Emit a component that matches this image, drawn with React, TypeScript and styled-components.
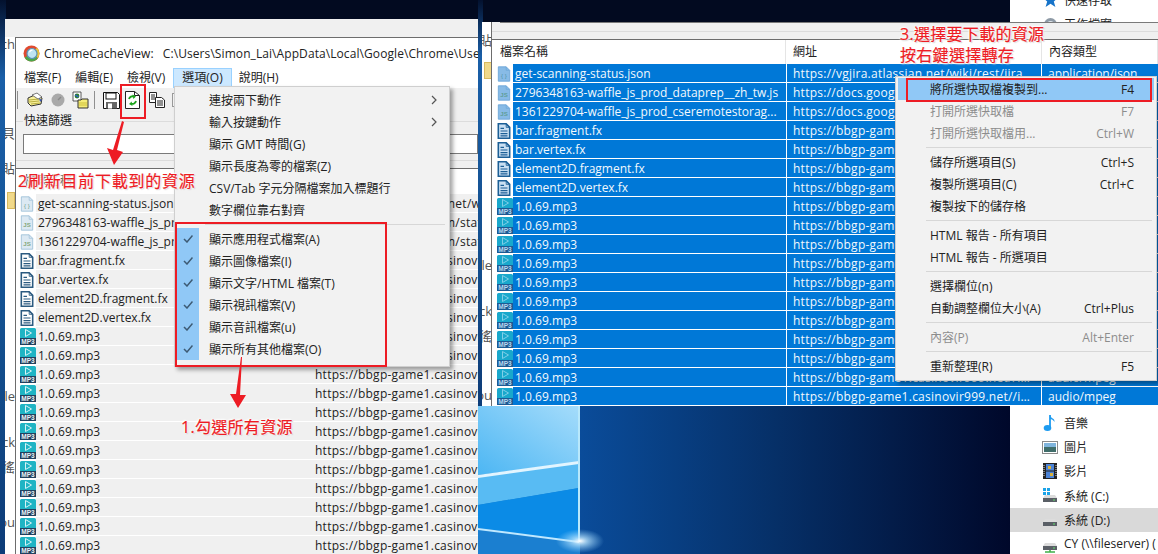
import React from "react";
import styled, { createGlobalStyle } from "styled-components";

const FONT = `"Open Sans", "Noto Sans CJK TC", sans-serif`;

const Global = createGlobalStyle`
  html, body { margin: 0; padding: 0; background: #020a20; }
  body { font-family: ${FONT}; font-size: 12px; color: #1a1a1a; }
`;

const Desktop = styled.div`
  position: relative;
  width: 1158px;
  height: 554px;
  overflow: hidden;
  background: #020a20;
`;
const WallpaperSvg = styled.svg`
  position: absolute;
  left: 0;
  top: 0;
`;

/* ---------- windows on the desktop ---------- */
const BackWindow = styled.div`
  position: absolute;
  left: 5px;
  top: 19px;
  width: 473px;
  height: 535px;
  background: #fff;
  display: flex;
  flex-direction: column;
  overflow: hidden;
`;
const BackTop = styled.div`
  height: 18px;
  background: #f0f0f0;
  flex: none;
`;
const BackFragment = styled.div<{ $gap: number }>`
  margin-top: ${(p) => p.$gap}px;
  height: 16px;
  line-height: 16px;
  width: 10px;
  flex: none;
  overflow: hidden;
  white-space: nowrap;
  color: #555;
  font-size: 13px;
  direction: rtl;
`;
const BackFolder = styled.div<{ $gap: number; $w: number }>`
  margin-top: ${(p) => p.$gap}px;
  margin-left: 2px;
  width: ${(p) => p.$w}px;
  height: 17px;
  flex: none;
  background: #f1d98a;
  border: 1px solid #d8b95e;
  box-sizing: border-box;
`;

const LeftWindow = styled.div`
  position: absolute;
  left: 15px;
  top: 37px;
  width: 463px;
  height: 517px;
  box-sizing: border-box;
  border-left: 1px solid #6d6d6d;
  border-top: 1px solid #6d6d6d;
  background: #f0f0f0;
  display: flex;
  flex-direction: column;
  overflow: hidden;
`;
const TitleBar = styled.div`
  height: 30px;
  flex: none;
  background: #fff;
  display: flex;
  align-items: center;
  padding-left: 7px;
  gap: 4px;
  white-space: nowrap;
  color: #222;
`;
const TitleText = styled.span`
  word-spacing: 6px;
  letter-spacing: 0.08px;
`;
const MenuBar = styled.div`
  height: 20px;
  flex: none;
  background: #fff;
  display: flex;
  align-items: center;
  padding-left: 7px;
  gap: 12px;
  color: #222;
`;
const MenuItem = styled.div<{ $active?: boolean }>`
  height: 20px;
  line-height: 18px;
  box-sizing: border-box;
  padding: 0 ${(p) => (p.$active ? 8 : 0)}px;
  margin: ${(p) => (p.$active ? "0 -6px 0 -5px" : "0")};
  border: 1px solid ${(p) => (p.$active ? "#99d1ff" : "transparent")};
  background: ${(p) => (p.$active ? "#cce8ff" : "transparent")};
`;
const Toolbar = styled.div`
  height: 30px;
  flex: none;
  display: flex;
  align-items: center;
  padding: 0 0 6px 0;
  box-sizing: border-box;
  gap: 5px;
`;
const ToolSep = styled.div<{ $left: number }>`
  width: 1px;
  height: 18px;
  background: #8f8f8f;
  margin: 0 3px 0 ${(p) => p.$left}px;
`;
const FilterGroup = styled.div`
  position: relative;
  height: 40px;
  margin-top: 3px;
  margin-bottom: 7px;
  flex: none;
  padding: 12px 0 0 7px;
  box-sizing: border-box;
  border-top: 1px solid #dcdcdc;
  border-bottom: 1px solid #dcdcdc;
`;
const FilterLegend = styled.div`
  position: absolute;
  left: 7px;
  top: -9px;
  padding: 0 2px 0 1px;
  line-height: 16px;
  background: #f0f0f0;
`;
const FilterInput = styled.div`
  height: 20px;
  background: #fff;
  border: 1px solid #7a7a7a;
  box-sizing: border-box;
`;
const ListTopLine = styled.div`
  height: 1px;
  flex: none;
  background: #6d6d6d;
`;
const LeftHeader = styled.div`
  height: 25px;
  flex: none;
  background: #fff;
  padding-left: 8px;
  line-height: 23px;
  color: #222;
`;
const RowList = styled.div`
  display: flex;
  flex-direction: column;
`;
const LeftRow = styled.div`
  height: 19px;
  flex: none;
  display: grid;
  grid-template-columns: 20px 278px 1fr;
  background: #fff;
`;
const LeftCell = styled.div<{ $url?: boolean }>`
  background: #f0f0f0;
  border-bottom: 1px solid #fff;
  line-height: 20px;
  padding-left: ${(p) => (p.$url ? 1 : 2)}px;
  letter-spacing: ${(p) => (p.$url ? 0.25 : 0)}px;
  white-space: nowrap;
  overflow: hidden;
  color: #222;
`;
const IconCell = styled.div`
  display: flex;
  align-items: center;
  justify-content: flex-end;
  height: 19px;
`;

const RightWindow = styled.div`
  position: absolute;
  left: 478px;
  top: 22px;
  width: 680px;
  height: 384px;
  display: grid;
  grid-template-columns: 4px 9px 1px 1fr;
  overflow: hidden;
`;
const RightGap = styled.div``;
const RightStrip = styled.div`
  background: #fff;
  overflow: hidden;
  display: flex;
  flex-direction: column;
`;
const RightBorder = styled.div`
  background: #6d6d6d;
`;
const RightBody = styled.div`
  background: #fff;
  display: flex;
  flex-direction: column;
  overflow: hidden;
`;
const RightTop = styled.div`
  height: 18px;
  flex: none;
  box-sizing: border-box;
  background: linear-gradient(#f0f0f0 0 9px, #dcdcdc 9px 10px, #f0f0f0 10px);
  border-bottom: 1px solid #6d6d6d;
`;
const InputEdge = styled.div`
  height: 1px;
  margin-left: 8px;
  background: #7a7a7a;
`;
const Header = styled.div`
  height: 24px;
  flex: none;
  display: grid;
  grid-template-columns: 294px 256px 1fr;
  line-height: 23px;
  background: #fff;
  color: #222;
`;
const HeadCell = styled.div<{ $first?: boolean }>`
  padding-left: ${(p) => (p.$first ? 8 : 7)}px;
  border-right: 1px solid #e5e5e5;
`;
const RightRow = styled.div`
  height: 19px;
  flex: none;
  display: grid;
  grid-template-columns: 21px 274px 255px 1fr;
`;
const SelCell = styled.div<{ $pad: number; $gap?: boolean; $url?: boolean }>`
  background: #0078d7;
  color: #f2f8fd;
  border-bottom: 1px solid #fff;
  border-right: ${(p) => (p.$gap ? "1px solid #fff" : "none")};
  line-height: 20px;
  padding: 0 6px 0 ${(p) => p.$pad}px;
  letter-spacing: ${(p) => (p.$url ? 0.25 : 0)}px;
  white-space: nowrap;
  overflow: hidden;
  text-overflow: ellipsis;
  min-width: 0;
`;

/* ---------- pop-up menus ---------- */
const PopMenu = styled.div<{ $x: number; $y: number; $w: number; $h: number; $padTop: number }>`
  position: absolute;
  left: ${(p) => p.$x}px;
  top: ${(p) => p.$y}px;
  width: ${(p) => p.$w}px;
  height: ${(p) => p.$h}px;
  box-sizing: border-box;
  background: #f2f2f2;
  border: 1px solid #cfcfcf;
  box-shadow: 3px 3px 4px rgba(0, 0, 0, 0.35);
  padding: ${(p) => p.$padTop}px 2px 2px;
  color: #222;
  display: flex;
  flex-direction: column;
`;
const Item = styled.div<{ $disabled?: boolean; $hl?: boolean }>`
  position: relative;
  height: 22px;
  flex: none;
  display: flex;
  align-items: center;
  justify-content: space-between;
  padding: 0 20px 0 32px;
  color: ${(p) => (p.$disabled ? "#8d8d8d" : "#222")};
  background: ${(p) => (p.$hl ? "#90c8f6" : "transparent")};
`;
const CheckBox = styled.div`
  position: absolute;
  left: 0;
  top: 0;
  width: 22px;
  height: 22px;
  background: #90c8f6;
  display: flex;
  align-items: center;
  justify-content: center;
`;
const ItemSep = styled.div`
  height: 1px;
  flex: none;
  background: #d7d7d7;
  margin: 3px 2px 3px 28px;
`;
const ChevronSvg = styled.svg`
  margin-right: -10px;
`;

/* ---------- annotations ---------- */
const RedBox = styled.div<{ $x: number; $y: number; $w: number; $h: number }>`
  position: absolute;
  left: ${(p) => p.$x}px;
  top: ${(p) => p.$y}px;
  width: ${(p) => p.$w}px;
  height: ${(p) => p.$h}px;
  box-sizing: border-box;
  border: 2px solid #ed1c24;
`;
const Note = styled.div<{ $x: number; $y: number; $ls: number }>`
  position: absolute;
  left: ${(p) => p.$x}px;
  top: ${(p) => p.$y}px;
  font-size: 16px;
  line-height: 22px;
  letter-spacing: ${(p) => p.$ls}px;
  white-space: nowrap;
  color: #ed1c24;
  -webkit-text-stroke: 0.2px #ed1c24;
  text-shadow: 0 0 2px #fff, 0 0 2px #fff, 1px 1px 2px #fff, -1px -1px 2px #fff, 1px 1px 1px #aaa;
`;
const ArrowSvg = styled.svg<{ $x: number; $y: number }>`
  position: absolute;
  left: ${(p) => p.$x}px;
  top: ${(p) => p.$y}px;
`;

/* ---------- explorer nav on the right ---------- */
const Explorer = styled.div`
  position: absolute;
  left: 1010px;
  top: 0;
  width: 148px;
  height: 554px;
  background: #fff;
  display: flex;
  flex-direction: column;
  justify-content: space-between;
  overflow: hidden;
`;
const NavGroup = styled.div<{ $top?: boolean }>`
  display: flex;
  flex-direction: column;
  margin-top: ${(p) => (p.$top ? -12 : 0)}px;
  margin-bottom: ${(p) => (p.$top ? 0 : -2)}px;
`;
const NavItem = styled.div<{ $hl?: boolean }>`
  height: 24.2px;
  display: flex;
  align-items: center;
  padding-left: 31px;
  gap: 5px;
  white-space: nowrap;
  color: #222;
  background: ${(p) => (p.$hl ? "#d9d9d9" : "transparent")};
`;
const NavIconBox = styled.span`
  width: 18px;
  height: 18px;
  display: flex;
  align-items: center;
  justify-content: center;
  flex: none;
`;
const LogoSvg = styled.svg`
  flex: none;
`;
const DocSvg = styled.svg`
  margin-right: 2px;
`;

/* ---------- drawings ---------- */
const Wallpaper = () => (
  <WallpaperSvg width="1158" height="554" viewBox="0 0 1158 554">
    <defs>
      <linearGradient id="navy" x1="0" x2="1" y1="0" y2="0">
        <stop offset="0" stopColor="#0a4c9a" />
        <stop offset="0.45" stopColor="#063068" />
        <stop offset="1" stopColor="#00082a" />
      </linearGradient>
      <linearGradient id="edge" x1="0" x2="0" y1="0" y2="1">
        <stop offset="0" stopColor="#03112e" />
        <stop offset="0.14" stopColor="#1a5fa8" />
        <stop offset="0.6" stopColor="#14508f" />
        <stop offset="1" stopColor="#0d3c78" />
      </linearGradient>
      <linearGradient id="top" x1="0" x2="1" y1="1" y2="0">
        <stop offset="0" stopColor="#4cb6f3" />
        <stop offset="1" stopColor="#a5dcfb" />
      </linearGradient>
      <radialGradient id="glow" cx="0.5" cy="0.5" r="0.5">
        <stop offset="0" stopColor="#ffffff" />
        <stop offset="0.3" stopColor="#bfe8ff" stopOpacity="0.75" />
        <stop offset="1" stopColor="#8fd3ff" stopOpacity="0" />
      </radialGradient>
    </defs>
    <rect width="1158" height="554" fill="#020a20" />
    <rect y="0" width="6" height="554" fill="url(#edge)" />
    <rect x="478" y="0" width="5" height="406" fill="url(#edge)" />
    <rect x="478" y="406" width="102" height="148" fill="#1b7fd0" />
    <rect x="580" y="406" width="430" height="148" fill="url(#navy)" />
    <polygon points="478,406 579,406 579,462 478,475" fill="url(#top)" />
    <polygon points="478,476 579,463 579,488 478,505" fill="#58bbf3" />
    <polygon points="478,505 579,488 579,542 478,528" fill="#0b8be6" />
    <polygon points="478,475 579,461 579,464 478,478" fill="#e2f5ff" />
    <polygon points="478,528 579,541 579,543 478,530" fill="#bfe8ff" />
    <rect x="578" y="406" width="2" height="136" fill="#b8e8fb" />
    <ellipse cx="580" cy="541" rx="24" ry="12" fill="url(#glow)" />
  </WallpaperSvg>
);

const DocBase = ({ fill, stroke, sw, children }: { fill: string; stroke: string; sw: number; children?: React.ReactNode }) => (
  <DocSvg width="14" height="16" viewBox="0 0 16 18">
    <path d="M1.5 .8h9l4 4v12.4h-13z" fill={fill} stroke={stroke} strokeWidth={sw} />
    <path d="M10.5 .8v4h4" fill="none" stroke={stroke} strokeWidth={sw > 1 ? 1 : 0.8} />
    {children}
  </DocSvg>
);
const JsonIcon = ({ sel }: { sel?: boolean }) => (
  <DocBase fill={sel ? "#88bbe6" : "#dce9f3"} stroke={sel ? "#6ba6d8" : "#9fc0d8"} sw={1}>
    <text x="8" y="13" fontSize="7" textAnchor="middle" fill={sel ? "#4f94a8" : "#6fa18c"} fontFamily="Liberation Sans">
      {"{ }"}
    </text>
  </DocBase>
);
const JsIcon = ({ sel }: { sel?: boolean }) => (
  <DocBase fill={sel ? "#88bbe6" : "#dce9f3"} stroke={sel ? "#6ba6d8" : "#9fc0d8"} sw={1}>
    <text x="8" y="14" fontSize="7" fontWeight="700" textAnchor="middle" fill={sel ? "#5f9e98" : "#84a77c"} fontFamily="Liberation Sans">
      JS
    </text>
  </DocBase>
);
const FxIcon = ({ sel }: { sel?: boolean }) => {
  const ink = sel ? "#1c5f96" : "#2b5a80";
  return (
    <DocBase fill={sel ? "#c9dff2" : "#fff"} stroke={ink} sw={1.8}>
      <path d="M4 6h4M4 9h8M4 12h8M4 14.5h8" stroke={ink} strokeWidth="1.4" />
    </DocBase>
  );
};
const Mp3Icon = ({ sel }: { sel?: boolean }) => (
  <svg width="16" height="17" viewBox="0 0 16 17">
    <path d="M0 10V1.5A1.5 1.5 0 0 1 1.500 0h13A1.500 1.500 0 0 1 16 1.500V10z" fill={sel ? "#19a8cc" : "#1fb4c4"} />
    <path d="M5.500 1.500l6 3.500-6 3.500z" fill="none" stroke={sel ? "#7fcfe8" : "#d5f3f6"} strokeWidth="1" />
    <rect y="10" width="16" height="7" fill={sel ? "#1c5b94" : "#22415f"} />
    <text x="8" y="16" fontSize="6.500" fontWeight="700" textAnchor="middle" fill={sel ? "#b9d8ee" : "#e8f2f6"} fontFamily="Liberation Sans">
      MP3
    </text>
  </svg>
);
const FileIcon = ({ kind, sel }: { kind: string; sel?: boolean }) =>
  kind === "json" ? <JsonIcon sel={sel} /> : kind === "js" ? <JsIcon sel={sel} /> : kind === "fx" ? <FxIcon sel={sel} /> : <Mp3Icon sel={sel} />;

const ChromeLogo = () => (
  <LogoSvg width="17" height="17" viewBox="0 0 17 17">
    <circle cx="8.500" cy="8.500" r="8" fill="#e04a2f" />
    <path d="M8.500 8.500L1.600 12.500A8 8 0 0 0 8.500 16.500 8 8 0 0 0 15 13z" fill="#4ca64a" />
    <path d="M8.500 8.500L15 13A8 8 0 0 0 14 2.800z" fill="#e9c53a" />
    <circle cx="9" cy="8.500" r="5" fill="#bfe4f2" stroke="#5a94b8" strokeWidth="1.200" />
    <path d="M6.500 7.200a3 3 0 0 1 3-2" stroke="#fff" fill="none" strokeWidth="1.200" />
  </LogoSvg>
);
const ToolOpen = () => (
  <svg width="18" height="18" viewBox="0 0 18 18">
    <path d="M2 7l9-4 5 4-1 6-10 2-3-3z" fill="#f7ef9a" stroke="#333" />
    <path d="M3 11l10-1M5 13l9-1M2.500 9l11-1" stroke="#b9b040" />
    <path d="M6 4l5-2 5 4-4 2z" fill="#fff" stroke="#444" strokeWidth=".7" />
    <path d="M13 7l3 2-2 2z" fill="#3a57b5" />
  </svg>
);
const ToolDisc = () => (
  <svg width="18" height="18" viewBox="0 0 18 18">
    <circle cx="9" cy="9" r="6.500" fill="#a9a9a9" />
    <path d="M9 9l3-3" stroke="#8a8a8a" strokeWidth="1.400" />
  </svg>
);
const ToolFolderDoc = () => (
  <svg width="17" height="18" viewBox="0 0 17 18">
    <path d="M1 1h8v9H1z" fill="#fff" stroke="#333" strokeWidth=".8" />
    <circle cx="5" cy="5" r="2.400" fill="#2e7d32" />
    <path d="M3.400 4l3 2" stroke="#2f5fd0" strokeWidth="1.400" />
    <path d="M6 9h3l1-1h6v9H6z" fill="#f5ec78" stroke="#333" />
    <path d="M7 12h8M7 14h8" stroke="#cdbf3a" />
  </svg>
);
const ToolSave = () => (
  <svg width="17" height="17" viewBox="0 0 17 17">
    <path d="M.5.5h14l2 2v14H.5z" fill="#fff" stroke="#111" />
    <rect x="3" y="1" width="10" height="6" fill="#fff" stroke="#111" />
    <rect x="3" y="10" width="11" height="6.500" fill="#666" />
    <rect x="5" y="11.500" width="4" height="5" fill="#fff" />
  </svg>
);
const ToolRefresh = () => (
  <svg width="15" height="18" viewBox="0 0 15 18">
    <path d="M.5 .5h9l5 4v13H.5z" fill="#fff" stroke="#222" />
    <path d="M9.500 .5v4h5" fill="none" stroke="#222" />
    <path d="M4 8a3.600 3.600 0 0 1 5-2.400" fill="none" stroke="#1ba21b" strokeWidth="1.800" />
    <path d="M7.500 3.500l3.500 2-2.600 2.500z" fill="#1ba21b" />
    <path d="M11 10a3.600 3.600 0 0 1-5 2.600" fill="none" stroke="#1ba21b" strokeWidth="1.800" />
    <path d="M7.500 15l-3.500-2 2.600-2.500z" fill="#1ba21b" />
  </svg>
);
const ToolCopy = () => (
  <svg width="20" height="16" viewBox="-4 0 20 16">
    <path d="M.5 .5h7v10h-7z" fill="#fff" stroke="#222" />
    <path d="M2 3h4M2 5h4M2 7h4" stroke="#222" />
    <path d="M6.500 5.500h6l3 2.500v7.500h-9z" fill="#fff" stroke="#222" />
    <path d="M8 9h6M8 11h6M8 13h6" stroke="#222" />
  </svg>
);
const ToolBoxStub = () => (
  <svg width="9" height="14" viewBox="-2 0 9 14">
    <rect x=".5" y=".5" width="7" height="13" fill="#f5f5f5" stroke="#9a9a9a" />
  </svg>
);
const Check = () => (
  <svg width="10" height="8" viewBox="0 0 10 8">
    <path d="M1 4l3 3 5.500-6.500" fill="none" stroke="#3d5a73" strokeWidth="1.500" />
  </svg>
);
const Chevron = () => (
  <ChevronSvg width="6" height="10" viewBox="0 0 6 10">
    <path d="M1 1l4 4-4 4" fill="none" stroke="#555" strokeWidth="1.200" />
  </ChevronSvg>
);

const NavMusic = () => (
  <svg width="16" height="18" viewBox="0 0 16 18">
    <path d="M8 1v12" stroke="#1d9bf0" strokeWidth="1.800" />
    <ellipse cx="5.500" cy="14" rx="3.800" ry="3" fill="#1d9bf0" />
    <path d="M8 1c1 4 5 3 4.500 7-1-2-3-3-4.500-3z" fill="#1d9bf0" />
  </svg>
);
const NavPic = () => (
  <svg width="16" height="13" viewBox="0 0 16 13">
    <rect x=".5" y=".5" width="15" height="12" fill="#fff" stroke="#8a8a8a" />
    <rect x="2" y="2" width="12" height="4" fill="#7fb4dc" />
    <rect x="2" y="6" width="12" height="5" fill="#3f6d6a" />
  </svg>
);
const NavFilm = () => (
  <svg width="14" height="16" viewBox="0 0 14 16">
    <rect width="14" height="16" fill="#222" />
    <rect x="3" y="1" width="8" height="6.500" fill="#4c83d6" />
    <rect x="3" y="8.500" width="8" height="6.500" fill="#4c83d6" />
    <rect x="5" y="3" width="3" height="3" fill="#d9b13a" />
    <rect x="7" y="10" width="3" height="3" fill="#d9b13a" />
    <path d="M1 2v12M13 2v12" stroke="#ddd" strokeDasharray="1 1" />
  </svg>
);
const NavDrive = ({ win, net }: { win?: boolean; net?: boolean }) => (
  <svg width="16" height="18" viewBox="0 0 16 18">
    {win && <path d="M1 1h3v3H1zM5 1h3v3H5zM1 5h3v3H1zM5 5h3v3H5z" fill="#1aa3e8" />}
    <path d="M1 11l2-3h10l2 3z" fill="#dcdcdc" />
    <rect x="1" y="11" width="14" height="4" fill="#5a5f66" />
    <rect x="11" y="12.500" width="2" height="1" fill="#5fe06a" />
    {net && <path d="M8 15v2M3 17h10" stroke="#3fb04a" strokeWidth="1.600" />}
  </svg>
);
const NavStar = () => (
  <svg width="15" height="15" viewBox="0 0 15 15">
    <path d="M7.500 0l2.200 5h5.300l-4.200 3.400 1.600 5.600-4.900-3.200-4.900 3.200 1.600-5.600L0 5h5.300z" fill="#1673c9" />
  </svg>
);
const NavGlobe = () => (
  <svg width="15" height="15" viewBox="0 0 15 15">
    <circle cx="7.500" cy="7.500" r="6.500" fill="#8e9aa6" />
    <circle cx="7.500" cy="7.500" r="3.500" fill="#dfe6ec" />
  </svg>
);

/* ---------- data ---------- */
const VG = "https://vgjira.atlassian.net/wiki/rest/jiraanywhere";
const DOCS = "https://docs.google.com/static/spreadsheets2/client";
const GAME = "https://bbgp-game1.casinovir999.net//ipl/game/assets";
const files = [
  { kind: "json", left: "get-scanning-status.json", right: "get-scanning-status.json", url: VG, type: "application/json" },
  { kind: "js", left: "2796348163-waffle_js_prod_dataprep__zh_tw.js", right: "2796348163-waffle_js_prod_dataprep__zh_tw.js", url: DOCS, type: "text/javascript" },
  { kind: "js", left: "1361229704-waffle_js_prod_cseremotestorage", right: "1361229704-waffle_js_prod_cseremotestorag...", url: DOCS, type: "text/javascript" },
  { kind: "fx", left: "bar.fragment.fx", right: "bar.fragment.fx", url: GAME, type: "text/plain" },
  { kind: "fx", left: "bar.vertex.fx", right: "bar.vertex.fx", url: GAME, type: "text/plain" },
  { kind: "fx", left: "element2D.fragment.fx", right: "element2D.fragment.fx", url: GAME, type: "text/plain" },
  { kind: "fx", left: "element2D.vertex.fx", right: "element2D.vertex.fx", url: GAME, type: "text/plain" },
];
const mp3 = (n: number) =>
  Array.from({ length: n }, () => ({ kind: "mp3", left: "1.0.69.mp3", right: "1.0.69.mp3", url: GAME, type: "audio/mpeg" }));
const leftRows = [...files, ...mp3(12)];
const rightRows = [...files, ...mp3(11)];

const optionsTop: { t: string; arrow?: boolean }[] = [
  { t: "連按兩下動作", arrow: true },
  { t: "輸入按鍵動作", arrow: true },
  { t: "顯示 GMT 時間(G)" },
  { t: "顯示長度為零的檔案(Z)" },
  { t: "CSV/Tab 字元分隔檔案加入標題行" },
  { t: "數字欄位靠右對齊" },
];
const optionsChecked = [
  "顯示應用程式檔案(A)",
  "顯示圖像檔案(I)",
  "顯示文字/HTML 檔案(T)",
  "顯示視訊檔案(V)",
  "顯示音訊檔案(u)",
  "顯示所有其他檔案(O)",
];
type Ctx = { t?: string; k?: string; dis?: boolean; hl?: boolean; sep?: boolean };
const ctxItems: Ctx[] = [
  { t: "將所選快取檔複製到...", k: "F4", hl: true },
  { t: "打開所選快取檔", k: "F7", dis: true },
  { t: "打開所選快取檔用...", k: "Ctrl+W", dis: true },
  { sep: true },
  { t: "儲存所選項目(S)", k: "Ctrl+S" },
  { t: "複製所選項目(C)", k: "Ctrl+C" },
  { t: "複製按下的儲存格" },
  { sep: true },
  { t: "HTML 報告 - 所有項目" },
  { t: "HTML 報告 - 所選項目" },
  { sep: true },
  { t: "選擇欄位(n)" },
  { t: "自動調整欄位大小(A)", k: "Ctrl+Plus" },
  { sep: true },
  { t: "內容(P)", k: "Alt+Enter", dis: true },
  { sep: true },
  { t: "重新整理(R)", k: "F5" },
];

export default function App() {
  return (
    <Desktop>
      <Global />
      <Wallpaper />

      <Explorer>
        <NavGroup $top>
          <NavItem><NavIconBox><NavStar /></NavIconBox>快速存取</NavItem>
          <NavItem><NavIconBox><NavGlobe /></NavIconBox>工作檔案</NavItem>
        </NavGroup>
        <NavGroup>
          <NavItem><NavIconBox><NavMusic /></NavIconBox>音樂</NavItem>
          <NavItem><NavIconBox><NavPic /></NavIconBox>圖片</NavItem>
          <NavItem><NavIconBox><NavFilm /></NavIconBox>影片</NavItem>
          <NavItem><NavIconBox><NavDrive win /></NavIconBox>系統 (C:)</NavItem>
          <NavItem $hl><NavIconBox><NavDrive /></NavIconBox>系統 (D:)</NavItem>
          <NavItem><NavIconBox><NavDrive net /></NavIconBox>CY (\\fileserver) (</NavItem>
        </NavGroup>
      </Explorer>

      <BackWindow>
        <BackTop />
        <BackFragment $gap={-1}>ch</BackFragment>
        <BackFragment $gap={73}>貝</BackFragment>
        <BackFragment $gap={19}>貼</BackFragment>
        <BackFolder $gap={16} $w={8} />
        <BackFragment $gap={179}>ile</BackFragment>
        <BackFragment $gap={30}>ck</BackFragment>
        <BackFragment $gap={9}>集徭</BackFragment>
        <BackFragment $gap={39}>ou</BackFragment>
      </BackWindow>

      <LeftWindow>
        <TitleBar>
          <ChromeLogo />
          <TitleText>ChromeCacheView: C:\Users\Simon_Lai\AppData\Local\Google\Chrome\User Data</TitleText>
        </TitleBar>
        <MenuBar>
          <MenuItem>檔案(F)</MenuItem>
          <MenuItem>編輯(E)</MenuItem>
          <MenuItem>檢視(V)</MenuItem>
          <MenuItem $active>選項(O)</MenuItem>
          <MenuItem>說明(H)</MenuItem>
        </MenuBar>
        <Toolbar>
          <ToolSep $left={1} />
          <ToolOpen />
          <ToolDisc />
          <ToolFolderDoc />
          <ToolSep $left={0} />
          <ToolSave />
          <ToolRefresh />
          <ToolCopy />
          <ToolBoxStub />
        </Toolbar>
        <FilterGroup>
          <FilterLegend>快速篩選</FilterLegend>
          <FilterInput />
        </FilterGroup>
        <ListTopLine />
        <LeftHeader>檔案名稱</LeftHeader>
        <RowList>
          {leftRows.map((r, i) => (
            <LeftRow key={i}>
              <IconCell><FileIcon kind={r.kind} /></IconCell>
              <LeftCell>{r.left}</LeftCell>
              <LeftCell $url>{r.url}</LeftCell>
            </LeftRow>
          ))}
        </RowList>
      </LeftWindow>

      <RightWindow>
        <RightGap />
        <RightStrip>
          <BackFragment $gap={10}>貼</BackFragment>
          <BackFolder $gap={14} $w={8} />
          <BackFragment $gap={178}>ile</BackFragment>
          <BackFragment $gap={30}>ck</BackFragment>
          <BackFragment $gap={9}>集徭</BackFragment>
          <BackFragment $gap={43}>ou</BackFragment>
        </RightStrip>
        <RightBorder />
        <RightBody>
          <RightTop><InputEdge /></RightTop>
          <Header>
            <HeadCell $first>檔案名稱</HeadCell>
            <HeadCell>網址</HeadCell>
            <HeadCell>內容類型</HeadCell>
          </Header>
          <RowList>
            {rightRows.map((r, i) => (
              <RightRow key={i}>
                <IconCell><FileIcon kind={r.kind} sel /></IconCell>
                <SelCell $pad={2} $gap>{r.right}</SelCell>
                <SelCell $pad={6} $gap $url>{r.url}</SelCell>
                <SelCell $pad={6}>{r.type}</SelCell>
              </RightRow>
            ))}
          </RowList>
        </RightBody>
      </RightWindow>

      <PopMenu $x={174} $y={86} $w={276} $h={281} $padTop={2}>
        {optionsTop.map((o) => (
          <Item key={o.t}>
            <span>{o.t}</span>
            {o.arrow && <Chevron />}
          </Item>
        ))}
        <ItemSep />
        {optionsChecked.map((t) => (
          <Item key={t}>
            <CheckBox><Check /></CheckBox>
            <span>{t}</span>
          </Item>
        ))}
      </PopMenu>

      <PopMenu $x={895} $y={76} $w={262} $h={305} $padTop={1}>
        {ctxItems.map((c, i) =>
          c.sep ? (
            <ItemSep key={i} />
          ) : (
            <Item key={i} $disabled={c.dis} $hl={c.hl}>
              <span>{c.t}</span>
              <span>{c.k}</span>
            </Item>
          )
        )}
      </PopMenu>

      <RedBox $x={120} $y={84} $w={26} $h={35} />
      <RedBox $x={175} $y={222} $w={212} $h={145} />
      <RedBox $x={906} $y={78} $w={246} $h={24} />

      <ArrowSvg $x={105} $y={120} width="22" height="46" viewBox="0 0 22 46">
        <path d="M17 1l2 1-7 28 6 2-9 13-7-17 6 2z" fill="#ed1c24" />
      </ArrowSvg>
      <ArrowSvg $x={229} $y={356} width="18" height="54" viewBox="0 0 18 54">
        <path d="M12 1h1L11 39l6 0-8 13-8-14 6 0z" fill="#ed1c24" />
      </ArrowSvg>

      <Note $x={18} $y={170} $ls={0.75}>2刷新目前下載到的資源</Note>
      <Note $x={181} $y={416} $ls={0.3}>1.勾選所有資源</Note>
      <Note $x={900} $y={23} $ls={0.3}>3.選擇要下載的資源</Note>
      <Note $x={900} $y={44} $ls={0.3}>按右鍵選擇轉存</Note>
    </Desktop>
  );
}
